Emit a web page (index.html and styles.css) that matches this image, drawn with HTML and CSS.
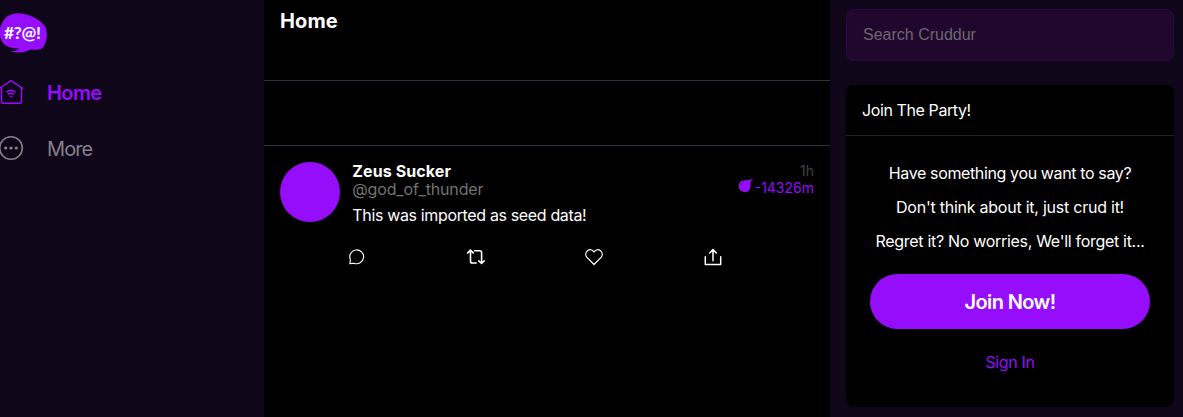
FILE: index.html
```html
<!DOCTYPE html>
<html lang="en">
<head>
<meta charset="utf-8">
<title>Cruddur</title>
<link rel="stylesheet" href="styles.css">
</head>
<body>
<div class="app">
  <nav class="sidebar">
    <svg class="logo" viewBox="0 0 48 42" role="img" aria-label="Cruddur">
      <path fill="#950dfb" d="M0 22C-1 10 6 0.500 17 0.200C27 0 38 5 44 12C48 17 47.500 27 44 33C42 37 37 37 31 36.500C25 39.500 18 40.500 10 38.500C15 38 18 37 19 35.500C8 35.500 1 32 0 22Z"/>
      <text class="logo-text" x="4" y="26" textLength="37">#?@!</text>
    </svg>
    <a class="nav-item active">
      <svg class="nav-icon" viewBox="0 0 24 26" fill="none" stroke="currentColor" stroke-width="1.400" stroke-linecap="round" stroke-linejoin="round">
        <path d="M-.5 9.300L11 1.700L22.500 9.300M1.500 8.300V22.500Q1.500 24.300 3.300 24.300H19.700Q21.500 24.300 21.500 22.500V8.300"/>
        <path d="M6.700 13Q11 9.300 15.300 13M8.400 15.200Q11 13.200 13.600 15.200"/>
        <circle cx="11" cy="17.500" r=".8" fill="currentColor" stroke-width=".6"/>
      </svg>
      <span>Home</span>
    </a>
    <a class="nav-item more">
      <svg class="nav-icon" viewBox="0 0 24 26" fill="none" stroke="currentColor" stroke-width="1.600">
        <circle cx="11" cy="13" r="11.300"/>
        <g fill="currentColor" stroke="none"><circle cx="5.700" cy="13" r="1.600"/><circle cx="11" cy="13" r="1.600"/><circle cx="16.300" cy="13" r="1.600"/></g>
      </svg>
      <span>More</span>
    </a>
  </nav>

  <main class="feed">
    <header class="feed-head">Home</header>
    <div class="feed-gap"></div>
    <article class="post">
      <div class="post-top">
        <div class="avatar"></div>
        <div class="post-body">
          <div class="post-meta">
            <div>
              <div class="name">Zeus Sucker</div>
              <div class="handle">@god_of_thunder</div>
            </div>
            <div class="times">
              <div class="ago">1h</div>
              <div class="expires">
                <svg class="bomb" viewBox="0 0 14 13" fill="currentColor"><path d="M5.500 1.200Q7.300 1 8.300 1.500L9.300 .5L10.500 1.300Q11.600 -.3 14 .5L13.700 1.400Q12.300 1.200 11.500 2.400L12 3.400L11 4.200Q12.200 7 11 9.700A5.900 5.900 0 1 1 5.500 1.200Z"/><path d="M2 6.200Q2.400 3.800 4.600 3.200" fill="none" stroke="#000" stroke-opacity=".4" stroke-width=".8"/></svg>
                <span>-14326m</span>
              </div>
            </div>
          </div>
          <p class="message">This was imported as seed data!</p>
        </div>
      </div>
      <div class="actions">
        <svg viewBox="0 0 18 18" fill="none" stroke="currentColor" stroke-width="1.150" stroke-linejoin="round"><path d="M1.900 15.600L2.400 11.700A6.900 6.900 0 1 1 6 15.200Z"/></svg>
        <svg viewBox="0 0 18 18" fill="none" stroke="currentColor" stroke-width="1.600" stroke-linecap="round" stroke-linejoin="round"><path d="M.7 4.900L3.500 2.200L6.300 4.900M3.500 2.500V13.200Q3.500 15 5.300 15H9.200M7.700 2.800H12.800Q14.600 2.800 14.600 4.600V15.200M11.800 12.800L14.600 15.500L17.300 12.800"/></svg>
        <svg viewBox="0 0 18 18" fill="none" stroke="currentColor" stroke-width="1.200" stroke-linejoin="round"><path d="M9 16.500L1.700 9.200C-1.800 4 5.500-1.600 9 4C12.500-1.600 19.800 4 16.300 9.200Z"/></svg>
        <svg viewBox="0 0 18 18" fill="none" stroke="currentColor" stroke-width="1.500" stroke-linecap="round" stroke-linejoin="round"><path d="M1.300 8.800V16.500H16.700V8.800M9 12.800V1.800M5.700 5L9 1.600L12.300 5"/></svg>
      </div>
    </article>
  </main>

  <aside class="rail">
    <input class="search" type="text" placeholder="Search Cruddur">
    <section class="join">
      <h2 class="join-title">Join The Party!</h2>
      <div class="join-body">
        <p class="line-a">Have something you want to say?</p>
        <p class="line-b">Don't think about it, just crud it!</p>
        <p class="line-c">Regret it? No worries, We'll forget it...</p>
        <a class="join-button">Join Now!</a>
        <a class="sign-in">Sign In</a>
      </div>
    </section>
  </aside>
</div>
</body>
</html>
```
FILE: styles.css
```css
* { box-sizing: border-box; }
body {
  margin: 0;
  background: #100619;
  color: #fff;
  font-family: Inter, "Liberation Sans", sans-serif;
  font-size: 16px;
  overflow: hidden;
}
p, h2 { margin: 0; }
svg { display: block; flex: none; overflow: visible; }
.app {
  display: grid;
  grid-template-columns: 264px 566px 353px;
  height: 417px;
}
.sidebar { padding-top: 13px; }
.logo { width: 48px; height: 42px; }
.logo-text {
  font: bold 17.5px Lato, sans-serif;
  fill: #fff;
}
.nav-item {
  display: flex;
  align-items: center;
  gap: 23px;
  height: 24px;
  margin-top: 26px;
  font-size: 20px;
  line-height: 24px;
}
.nav-item + .nav-item { margin-top: 32px; }
.nav-icon { width: 24px; height: 26px; margin-bottom: 2px; }
.active { color: #950dfb; font-weight: 600; letter-spacing: -.6px; }
.more { color: #888089; letter-spacing: -.9px; }
.feed { background: #000; }
.feed-head {
  height: 81px;
  padding: 9px 16px;
  border-bottom: 1px solid #303340;
  font-size: 20px;
  font-weight: 700;
  line-height: 24px;
  letter-spacing: .1px;
}
.feed-gap { height: 65px; border-bottom: 1px solid #35323f; }
.post { padding: 16px; }
.post-top { display: flex; gap: 12.3px; }
.avatar { width: 60px; height: 60px; border-radius: 50%; background: #950dfb; }
.post-body { flex: 1; }
.post-meta { display: flex; justify-content: space-between; line-height: 18px; }
.name { font-weight: 700; letter-spacing: .1px; }
.handle { color: #737373; letter-spacing: -.15px; }
.times { font-size: 14px; line-height: 17px; text-align: right; }
.ago { color: #41424a; }
.expires { display: flex; color: #950dfb; }
.bomb { width: 14px; height: 13px; margin-right: 2px; }
.message { margin-top: 7px; line-height: 20px; letter-spacing: -.35px; }
.actions {
  display: flex;
  justify-content: space-between;
  width: 374px;
  margin: 23px 0 0 68px;
}
.actions svg { width: 18px; height: 18px; }
.rail { padding: 9px 9px 0 16px; }
.search {
  display: block;
  width: 100%;
  height: 52px;
  padding: 0 16px;
  border: 1px solid #2b0845;
  border-radius: 8px;
  background: #1f072e;
  font: 16px "Liberation Sans", Arial, sans-serif;
}
.search::placeholder { color: #6d6671; }
.join { height: 322px; margin-top: 24px; border-radius: 8px; background: #000; }
.join-title {
  height: 51px;
  padding: 15px 16px;
  border-bottom: 1px solid #20202a;
  font-size: 16px;
  font-weight: 400;
  line-height: 20px;
  letter-spacing: -.4px;
}
.join-body {
  display: flex;
  flex-direction: column;
  padding: 27px 24px 0;
  text-align: center;
  line-height: 20px;
}
.join-body p + p { margin-top: 14px; }
.line-a { letter-spacing: -.37px; }
.line-b { letter-spacing: -.24px; }
.line-c { letter-spacing: -.3px; }
.join-button {
  height: 55px;
  margin-top: 23px;
  border-radius: 28px;
  background: #950dfb;
  font-size: 20px;
  font-weight: 600;
  line-height: 56px;
  letter-spacing: -.6px;
}
.sign-in { margin-top: 23px; color: #950dfb; letter-spacing: -.35px; }
```
